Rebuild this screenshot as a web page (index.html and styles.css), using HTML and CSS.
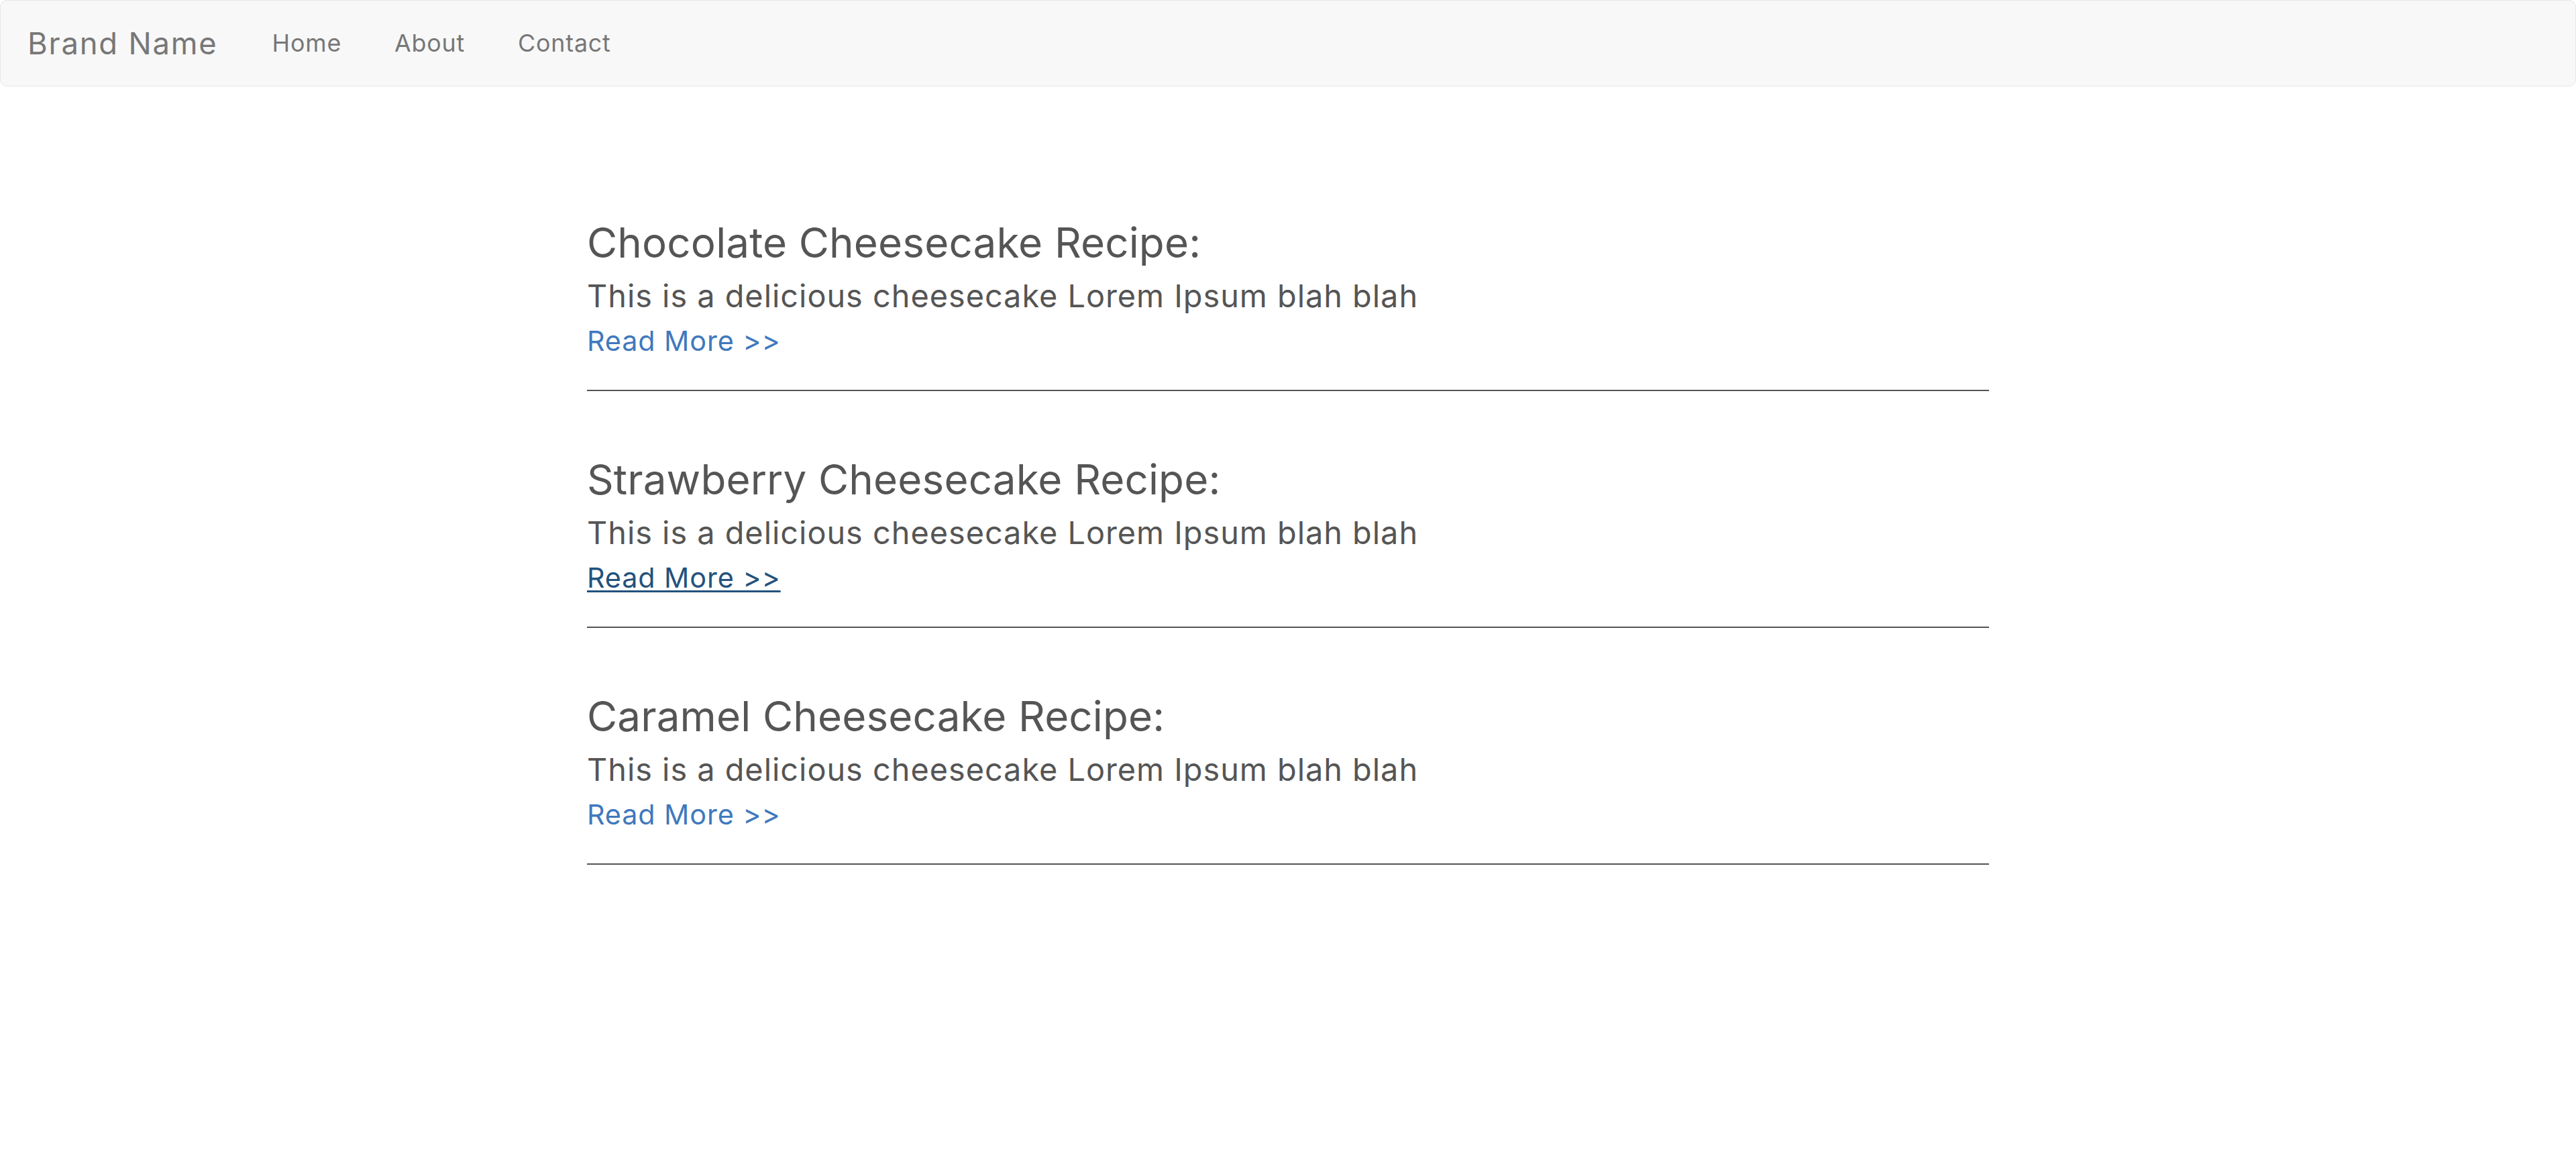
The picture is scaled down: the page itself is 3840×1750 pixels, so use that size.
FILE: index.html
```html
<!DOCTYPE html>
<html lang="en">
<head>
<meta charset="utf-8">
<title>Cheesecake Recipes</title>
<link rel="stylesheet" href="styles.css">
</head>
<body>
<nav class="navbar">
  <a class="brand" href="#">Brand Name</a>
  <ul class="nav-links">
    <li><a href="#">Home</a></li>
    <li><a href="#">About</a></li>
    <li><a href="#">Contact</a></li>
  </ul>
</nav>
<main class="content">
  <article class="post">
    <h2 class="post-title">Chocolate Cheesecake Recipe:</h2>
    <p class="post-text">This is a delicious cheesecake Lorem Ipsum blah blah</p>
    <div class="post-more"><a class="more-link" href="#">Read More &gt;&gt;</a></div>
  </article>
  <hr class="divider">
  <article class="post">
    <h2 class="post-title">Strawberry Cheesecake Recipe:</h2>
    <p class="post-text">This is a delicious cheesecake Lorem Ipsum blah blah</p>
    <div class="post-more"><a class="more-link is-hover" href="#">Read More &gt;&gt;</a></div>
  </article>
  <hr class="divider">
  <article class="post">
    <h2 class="post-title">Caramel Cheesecake Recipe:</h2>
    <p class="post-text">This is a delicious cheesecake Lorem Ipsum blah blah</p>
    <div class="post-more"><a class="more-link" href="#">Read More &gt;&gt;</a></div>
  </article>
  <hr class="divider">
</main>
</body>
</html>
```
FILE: styles.css
```css
* { box-sizing: border-box; }

html, body {
  margin: 0;
  padding: 0;
  background: #ffffff;
}

body {
  font-family: "Inter", "Open Sans", sans-serif;
  color: #555555;
}

.navbar {
  display: flex;
  align-items: center;
  height: 129px;
  padding-left: 40px;
  background: #f8f8f8;
  border: 1px solid #e7e7e7;
  border-radius: 10px;
}

.brand {
  font-size: 45.4px;
  letter-spacing: 1.8px;
  line-height: 1;
  color: #777777;
  text-decoration: none;
}

.nav-links {
  display: flex;
  gap: 79px;
  list-style: none;
  margin: 0 0 0 81px;
  padding: 0;
}

.nav-links li {
  font-size: 35.8px;
  line-height: 1;
}

.nav-links a {
  letter-spacing: 0.8px;
  color: #777777;
  text-decoration: none;
}

.content {
  width: 2090px;
  margin: 196px auto 0;
}

.post-title {
  margin: 0 0 14px;
  font-size: 61.9px;
  font-weight: 400;
  letter-spacing: 0.15px;
  line-height: 74px;
  color: #555555;
}

.post-text {
  margin: 0 0 14px;
  font-size: 46.8px;
  letter-spacing: 1px;
  line-height: 56px;
  color: #555555;
}

.post-more {
  font-size: 41.3px;
  line-height: 50px;
}

.more-link {
  letter-spacing: 0.9px;
  color: #3f79bd;
  text-decoration: none;
}

.more-link.is-hover {
  color: #23527c;
  text-decoration: underline;
  text-decoration-thickness: 3px;
  text-underline-offset: 4px;
}

.divider {
  height: 2px;
  margin: 48px 0 95px;
  border: 0;
  background: #555555;
}
```
